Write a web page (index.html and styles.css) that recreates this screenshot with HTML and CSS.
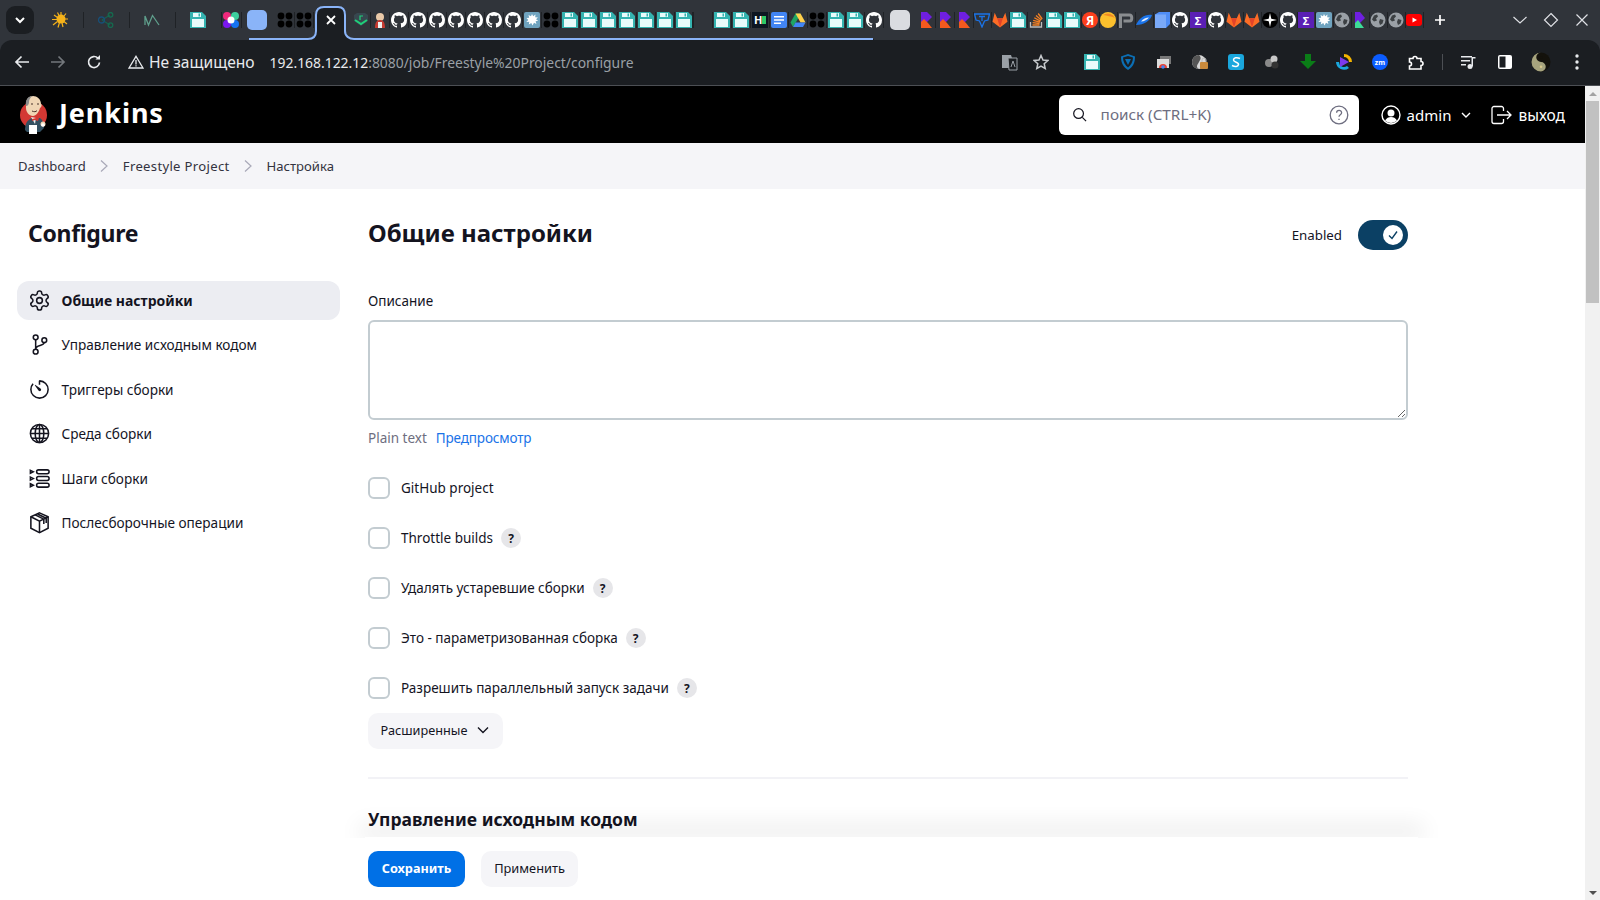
FILE: index.html
```html
<!DOCTYPE html>
<html lang="ru">
<head>
    <meta charset="UTF-8">
    <title>Freestyle Project Config [Jenkins]</title>
    <link rel="stylesheet" href="styles.css">
</head>
<body>

<!-- favicons used again and again in the tab strip -->
<svg class="defs" width="0" height="0">
    <symbol id="floppy" viewBox="0 0 16 16">
        <path d="M0 0h12l4 4v12H0z" fill="#35b3b0"/>
        <path d="M3 1h8v4H3zM2 7h12v8H2z" fill="#e9fbfb"/>
        <path d="M8.500 1.500h1.500v3H8.500z" fill="#35b3b0"/>
    </symbol>
    <symbol id="github" viewBox="0 0 16 16">
        <path fill="#fff" d="M8 0C3.58 0 0 3.58 0 8c0 3.54 2.29 6.53 5.47 7.59.4.07.55-.17.55-.38 0-.19-.01-.82-.01-1.49-2.01.37-2.53-.49-2.69-.94-.09-.23-.48-.94-.82-1.13-.28-.15-.68-.52-.01-.53.63-.01 1.08.58 1.23.82.72 1.21 1.87.87 2.33.66.07-.52.28-.87.51-1.07-1.78-.2-3.64-.89-3.64-3.95 0-.87.31-1.59.82-2.15-.08-.2-.36-1.02.08-2.12 0 0 .67-.21 2.2.82.64-.18 1.32-.27 2-.27.68 0 1.36.09 2 .27 1.53-1.04 2.2-.82 2.2-.82.44 1.1.16 1.92.08 2.12.51.56.82 1.27.82 2.15 0 3.07-1.87 3.75-3.65 3.95.29.25.54.73.54 1.48 0 1.07-.01 1.93-.01 2.2 0 .21.15.46.55.38A8.013 8.013 0 0016 8c0-4.42-3.58-8-8-8z"/>
    </symbol>
    <symbol id="dots" viewBox="0 0 16 16">
        <circle cx="4" cy="4" r="3.400"/><circle cx="12" cy="4" r="3.400"/>
        <circle cx="4" cy="12" r="3.400"/><circle cx="12" cy="12" r="3.400"/>
    </symbol>
    <symbol id="splash" viewBox="0 0 16 16">
        <rect width="16" height="16" rx="2" fill="#6fa3bf"/>
        <path d="M8 2l1.200 2.200L11.500 2.500l-.3 2.700 2.800.3-2 1.700 2.200 1.500-2.600.6.800 2.700-2.400-1.200L8.500 13.500 7.300 11l-2.500 1.500.5-2.700-3 .2 2-2L2.500 6l2.700-.3L4.500 3l2.500 1.200z" fill="#fff"/>
    </symbol>
    <symbol id="kotlin" viewBox="0 0 16 16">
        <path d="M3 0h6l5 5-5 5H3z" fill="#6f1fe0"/>
        <path d="M3 10l3-3 4 4 4 5H3z" fill="#f4591e"/>
    </symbol>
    <symbol id="gitlab" viewBox="0 0 16 16">
        <path d="M8 15.500L.500 9.800 2.700.8l2.500 5.400h5.600L13.300.8l2.200 9z" fill="#fc6d26"/>
        <path d="M8 15.500L5.200 6.200h5.600z" fill="#e24329"/>
    </symbol>
    <symbol id="globe" viewBox="0 0 16 16">
        <circle cx="8" cy="8" r="7.500" fill="#9aa0a6"/>
        <path d="M4 3.500l3-1 1 2-2 2 1 2-3 1-2-2zM10 7l3.500 1-1 3.500-2.500 1.500-1-3z" fill="#3c4043"/>
    </symbol>
</svg>

<div class="tabstrip">
    <!-- outline of the active tab and the tab group line -->
    <svg class="tab-outline" width="880" height="41" viewBox="0 0 880 41">
        <path d="M249 40v-1h59c5 0 8-3 8-8V15c0-5 3-8 8-8h14c5 0 8 3 8 8v16c0 5 3 8 8 8h520v1z" fill="#1b1e22"/>
        <path d="M249 39h59c5 0 8-3 8-8V15c0-5 3-8 8-8h14c5 0 7 3 7 8v16c0 5 4 8 9 8h519" fill="none" stroke="#8ab4f8" stroke-width="2"/>
    </svg>

    <button class="tab-search">
        <svg width="12" height="12" viewBox="0 0 12 12"><path d="M2 4l4 4 4-4" fill="none" stroke="#fff" stroke-width="2"/></svg>
    </button>

    <span class="tab wide"><svg class="fav" viewBox="0 0 16 16"><circle cx="9" cy="7" r="4.500" fill="#f5b21a"/><path d="M9 0v3M14 1.500l-2 2.500M16 7h-3M15 12l-3-2.500M11 15l-1-4M6 15.500l1.500-5M1 13l4.500-3.500M0 7.500h5M2 3l3.500 2.500M5.500 0.500l1.500 3" stroke="#f5b21a" stroke-width="1.200"/></svg></span>
    <span class="tab wide"><svg class="fav" viewBox="0 0 16 16" fill="none" stroke-width="1.300"><path d="M4 8l8-5M4 8l8 5" stroke="#15604f"/><circle cx="3.500" cy="8" r="3" stroke="#174f78"/><circle cx="12.500" cy="2.800" r="2.300" stroke="#156a4f"/><circle cx="12.500" cy="13.200" r="2.300" stroke="#156a4f"/></svg></span>
    <span class="tab wide"><svg class="fav" viewBox="0 0 16 16" fill="none" stroke="#5f9f8c" stroke-width="1.300"><path d="M1 13V4l3.500 9 4-9.500L15 13"/></svg></span>
    <span class="tab wide"><svg class="fav"><use href="#floppy"/></svg></span>
    <span class="tab w20"><svg class="fav" viewBox="0 0 16 16"><circle cx="4" cy="4" r="4" fill="#f0297c"/><circle cx="12" cy="4" r="4" fill="#3ecf9e"/><circle cx="4" cy="12" r="4" fill="#7a18f0"/><circle cx="12" cy="12" r="4" fill="#1573f0"/><circle cx="8" cy="8" r="3.500" fill="#fff"/></svg></span>
    <span class="tab w32"><span class="blank blue"></span></span>
    <span class="tab after-blank"><svg class="fav"><use href="#dots"/></svg></span>
    <span class="tab"><svg class="fav"><use href="#dots"/></svg></span>

    <span class="tab-active">
        <svg width="12" height="12" viewBox="0 0 12 12"><path d="M2 2l8 8M10 2l-8 8" stroke="#fff" stroke-width="1.800"/></svg>
    </span>

    <span class="tab"><svg class="fav" viewBox="0 0 16 16"><path d="M1 3l3-2h8l3 2v6l-7 5-7-5z" fill="#37474f"/><path d="M2 8l6 4 6-4" fill="none" stroke="#1fd07a" stroke-width="2"/><path d="M7 8V4h3" fill="none" stroke="#1fd07a" stroke-width="1.200"/></svg></span>
    <span class="tab"><svg class="fav" viewBox="0 0 16 16"><circle cx="8" cy="5" r="4" fill="#e9c9a8"/><path d="M3 16c0-6 2-8 5-8s5 2 5 8z" fill="#c43a32"/><path d="M6 10h4v6H6z" fill="#eee"/></svg></span>
    <span class="tab"><svg class="fav"><use href="#github"/></svg></span>
    <span class="tab"><svg class="fav"><use href="#github"/></svg></span>
    <span class="tab"><svg class="fav"><use href="#github"/></svg></span>
    <span class="tab"><svg class="fav"><use href="#github"/></svg></span>
    <span class="tab"><svg class="fav"><use href="#github"/></svg></span>
    <span class="tab"><svg class="fav"><use href="#github"/></svg></span>
    <span class="tab"><svg class="fav"><use href="#github"/></svg></span>
    <span class="tab"><svg class="fav"><use href="#splash"/></svg></span>
    <span class="tab"><svg class="fav"><use href="#dots"/></svg></span>
    <span class="tab"><svg class="fav"><use href="#floppy"/></svg></span>
    <span class="tab"><svg class="fav"><use href="#floppy"/></svg></span>
    <span class="tab"><svg class="fav"><use href="#floppy"/></svg></span>
    <span class="tab"><svg class="fav"><use href="#floppy"/></svg></span>
    <span class="tab"><svg class="fav"><use href="#floppy"/></svg></span>
    <span class="tab"><svg class="fav"><use href="#floppy"/></svg></span>
    <span class="tab"><svg class="fav"><use href="#floppy"/></svg></span>

    <span class="tab tab-gap"></span>

    <span class="tab"><svg class="fav"><use href="#floppy"/></svg></span>
    <span class="tab"><svg class="fav"><use href="#floppy"/></svg></span>
    <span class="tab"><svg class="fav" viewBox="0 0 16 16"><rect width="16" height="16" fill="#0d1621"/><text x="2" y="12" class="hn-glyph">H</text><rect x="10" y="4" width="4" height="8" fill="#2ec866"/></svg></span>
    <span class="tab"><svg class="fav" viewBox="0 0 16 16"><rect width="16" height="16" rx="2" fill="#4285f4"/><path d="M3 4h10v1.600H3zM3 7.200h10v1.600H3zM3 10.400h7V12H3z" fill="#fff"/></svg></span>
    <span class="tab"><svg class="fav" viewBox="0 0 16 16"><path d="M5.500 1.500h5L8 6.500 5.500 11 3 15 .5 10.500z" fill="#1fa463"/><path d="M5.500 1.500h5l5 9h-5z" fill="#ffd04b"/><path d="M3 15l2.500-4.500h10L13 15z" fill="#4285f4"/></svg></span>
    <span class="tab"><svg class="fav"><use href="#dots"/></svg></span>
    <span class="tab"><svg class="fav"><use href="#floppy"/></svg></span>
    <span class="tab"><svg class="fav"><use href="#floppy"/></svg></span>
    <span class="tab"><svg class="fav"><use href="#github"/></svg></span>

    <span class="tab w33"><span class="blank grey"></span></span>

    <span class="tab"><svg class="fav"><use href="#kotlin"/></svg></span>
    <span class="tab"><svg class="fav"><use href="#kotlin"/></svg></span>
    <span class="tab"><svg class="fav"><use href="#kotlin"/></svg></span>

    <span class="tab t18"><svg class="fav" viewBox="0 0 16 16" fill="none" stroke="#1a73e8" stroke-width="1.300"><path d="M.5 2h15L14 8l-3.500 1L8 15l-2.500-6L2 8zM5 4.500h6M8 4.500V9"/></svg></span>
    <span class="tab t18"><svg class="fav"><use href="#gitlab"/></svg></span>
    <span class="tab t18"><svg class="fav"><use href="#floppy"/></svg></span>
    <span class="tab t18"><svg class="fav" viewBox="0 0 16 16" fill="none" stroke-width="1.300"><path d="M2.500 10v5h11v-5" stroke="#bcbbbb"/><path d="M4.500 13h7M4.600 10.700l7 .8M5.200 8.300l6.800 1.800M6.300 5.800l6.200 3.300M8 3.500l5.300 4.500M10.200 1.500l4 5.500" stroke="#f48024"/></svg></span>
    <span class="tab t18"><svg class="fav"><use href="#floppy"/></svg></span>
    <span class="tab t18"><svg class="fav"><use href="#floppy"/></svg></span>
    <span class="tab t18"><svg class="fav" viewBox="0 0 16 16"><circle cx="8" cy="8" r="8" fill="#fc3f1d"/><text x="8" y="12.500" text-anchor="middle" class="ya-glyph">Я</text></svg></span>
    <span class="tab t18"><svg class="fav" viewBox="0 0 16 16"><circle cx="8" cy="8" r="8" fill="#fbc02d"/><path d="M3 3a8 8 0 0 1 12 3c-4-2-8-2-12-3z" fill="#f08a24"/></svg></span>
    <span class="tab t18"><svg class="fav" viewBox="0 0 16 16" fill="none" stroke="#8a8d90" stroke-width="3"><path d="M2.500 16V3h9c3 0 3 6 0 6h-6"/></svg></span>
    <span class="tab t18"><svg class="fav" viewBox="0 0 16 16"><path d="M0 13C3 6 9 2 16 3c-1 5-8 10-16 10z" fill="#1a73e8"/><path d="M5 9.500C7 7 10 5.500 13 5.500c-1.500 2-5 4-8 4z" fill="#e8f0fe"/></svg></span>
    <span class="tab t18"><svg class="fav" viewBox="0 0 16 16"><path d="M1 2.500L5 0h11v12l-4 4H1z" fill="#4f8df5"/><path d="M1 2.500h11V16H1z" fill="#7aa9f7"/></svg></span>
    <span class="tab t18"><svg class="fav"><use href="#github"/></svg></span>
    <span class="tab t18"><svg class="fav" viewBox="0 0 16 16"><rect width="16" height="16" fill="#5a1fb4"/><text x="8" y="12.500" text-anchor="middle" class="sigma-glyph">Σ</text></svg></span>
    <span class="tab t18"><svg class="fav"><use href="#github"/></svg></span>
    <span class="tab t18"><svg class="fav"><use href="#gitlab"/></svg></span>
    <span class="tab t18"><svg class="fav"><use href="#gitlab"/></svg></span>
    <span class="tab t18"><svg class="fav" viewBox="0 0 16 16"><rect width="16" height="16" rx="8" fill="#000"/><path d="M8 1l1.300 5.700L15 8l-5.700 1.300L8 15 6.700 9.300 1 8l5.700-1.300z" fill="#fff"/></svg></span>
    <span class="tab t18"><svg class="fav"><use href="#github"/></svg></span>
    <span class="tab t18"><svg class="fav" viewBox="0 0 16 16"><rect width="16" height="16" fill="#5a1fb4"/><text x="8" y="12.500" text-anchor="middle" class="sigma-glyph">Σ</text></svg></span>
    <span class="tab t18"><svg class="fav"><use href="#splash"/></svg></span>
    <span class="tab t18"><svg class="fav"><use href="#globe"/></svg></span>
    <span class="tab t18"><svg class="fav" viewBox="0 0 16 16"><path d="M3 0h5l5 6-5 5H3z" fill="#6f1fe0"/><path d="M3 11l3-3 6 8H3z" fill="#3ddc97"/></svg></span>
    <span class="tab t18"><svg class="fav"><use href="#globe"/></svg></span>
    <span class="tab t18"><svg class="fav"><use href="#globe"/></svg></span>
    <span class="tab t18"><svg class="fav" viewBox="0 0 16 16"><rect y="2" width="16" height="12" rx="3" fill="#f00"/><path d="M6.500 5.500v5L11 8z" fill="#fff"/></svg></span>

    <span class="tab-new">
        <svg width="12" height="12" viewBox="0 0 12 12"><path d="M6 1v10M1 6h10" stroke="#fff" stroke-width="1.700"/></svg>
    </span>

    <div class="win-controls">
        <span class="win-btn"><svg width="16" height="16" viewBox="0 0 16 16"><path d="M1.500 5L8 11l6.500-6" fill="none" stroke="#dfe1e5" stroke-width="1.200"/></svg></span>
        <span class="win-btn"><svg width="16" height="16" viewBox="0 0 16 16"><path d="M8 1.500L14.500 8 8 14.500 1.500 8z" fill="none" stroke="#dfe1e5" stroke-width="1.200"/></svg></span>
        <span class="win-btn"><svg width="16" height="16" viewBox="0 0 16 16"><path d="M2.500 2.500l11 11M13.500 2.500l-11 11" stroke="#dfe1e5" stroke-width="1.200"/></svg></span>
    </div>
</div>

<div class="toolbar">
    <span class="tb-btn"><svg width="16" height="16" viewBox="0 0 16 16" fill="none" stroke="#e8eaed" stroke-width="1.700"><path d="M15 8H2M7.500 2.500L2 8l5.500 5.500"/></svg></span>
    <span class="tb-btn"><svg width="16" height="16" viewBox="0 0 16 16" fill="none" stroke="#73777c" stroke-width="1.700"><path d="M1 8h13M8.500 2.500L14 8l-5.500 5.500"/></svg></span>
    <span class="tb-btn"><svg width="16" height="16" viewBox="0 0 16 16" fill="none" stroke="#e8eaed" stroke-width="1.700"><path d="M13.500 8.500a5.500 5.500 0 1 1-1.600-4.400"/><path d="M14 1v4.500H9.500" fill="#e8eaed" stroke="none"/></svg></span>
    <svg class="warn-icon" width="16" height="14" viewBox="0 0 16 14" fill="none" stroke="#e8eaed" stroke-width="1.300"><path d="M8 1.300L15 13H1z"/><path d="M8 5v4.500M8 10.300v1.200"/></svg>
    <span class="not-secure">Не защищено</span>
    <span class="url"><span class="url-host">192.168.122.12</span>:8080/job/Freestyle%20Project/configure</span>

    <div class="tb-right">
        <span class="tb-btn small"><svg width="17" height="17" viewBox="0 0 17 17"><path d="M1 1h9l1 3h-1v10H1z" fill="#9aa0a6"/><path d="M7 4h9v12H8z" fill="#1b1e22" stroke="#9aa0a6"/><path d="M10 13l2-6 2 6" fill="none" stroke="#9aa0a6"/></svg></span>
        <span class="tb-btn small"><svg width="16" height="16" viewBox="0 0 16 16"><path d="M8 1.500l2 4.500 4.800.5-3.600 3.200 1 4.800L8 12l-4.200 2.500 1-4.800L1.200 6.500 6 6z" fill="none" stroke="#c7cacd" stroke-width="1.500"/></svg></span>
        <span class="tb-btn first-ext"><svg class="fav"><use href="#floppy"/></svg></span>
        <span class="tb-btn"><svg class="fav" viewBox="0 0 16 16"><path d="M8 0l7 2.500C15 9 13 13 8 16 3 13 1 9 1 2.500z" fill="#0b6fb5"/><path d="M3 3.500L8 2l5 1.500C13 8 11 11 8 13.500 5 11 3 8 3 3.500z" fill="#1b1e22"/><path d="M5 5h6L8 11z" fill="#0b6fb5"/></svg></span>
        <span class="tb-btn"><svg class="fav" viewBox="0 0 16 16"><path d="M4 2h11v8H4z" fill="#777"/><path d="M1 5h12v9H1z" fill="#ddd"/><path d="M3 14a4 4 0 0 1 8 0z" fill="#ea4335"/><circle cx="7" cy="13" r="1.800" fill="#4285f4"/></svg></span>
        <span class="tb-btn"><svg class="fav" viewBox="0 0 16 16"><circle cx="7" cy="8" r="7" fill="#d8d8d8"/><path d="M7 1a7 7 0 0 0 0 14c-4-2-1-5 0-7s3-4 0-7z" fill="#555"/><rect x="8" y="8" width="8" height="7" rx="1" fill="#c98a3c"/><path d="M10 8V6a2 2 0 0 1 4 0v2" fill="none" stroke="#bbb"/></svg></span>
        <span class="tb-btn"><svg class="fav" viewBox="0 0 16 16"><rect width="16" height="16" rx="3" fill="#1aa7dd"/><path d="M12 4.500C9 3 5.500 3.500 5.500 6S11 8 10.500 10.500 7 13 4 11.500" fill="none" stroke="#fff" stroke-width="1.500"/></svg></span>
        <span class="tb-btn"><svg class="fav" viewBox="0 0 16 16"><circle cx="5" cy="9" r="4" fill="#8a8a8a"/><circle cx="10" cy="5" r="3.500" fill="#c9c9c9"/><circle cx="11" cy="11" r="3.500" fill="#333"/></svg></span>
        <span class="tb-btn"><svg class="fav" viewBox="0 0 16 16"><path d="M5 0h6v7h5l-8 8-8-8h5z" fill="#0a7d17"/></svg></span>
        <span class="tb-btn"><svg class="fav" viewBox="0 0 16 16"><path d="M8 0a8 8 0 0 1 8 8h-3a5 5 0 0 0-5-5z" fill="#f4b400"/><path d="M0 8a8 8 0 0 0 13 6l-2-2A5 5 0 0 1 3 8z" fill="#1aa7dd"/><path d="M4 3l9 5-9 5z" fill="#7c3aed"/></svg></span>
        <span class="tb-btn"><svg class="fav" viewBox="0 0 16 16"><circle cx="8" cy="8" r="8" fill="#0b5cff"/><text x="8" y="10.500" text-anchor="middle" class="zm-glyph">zm</text></svg></span>
        <span class="tb-btn"><svg class="fav" viewBox="0 0 16 16" fill="none" stroke="#fff" stroke-width="1.600"><path d="M1.500 4.500h3.500a2 2 0 0 1 4 0H13v3a2 2 0 0 1 0 4v3.500H1.500v-3a2 2 0 0 0 0-4z"/></svg></span>
        <span class="tb-sep"></span>
        <span class="tb-btn"><svg class="fav" viewBox="0 0 16 16" fill="#e8eaed"><path d="M0 2h11v1.500H0zM0 6h9v1.500H0zM0 10h5v1.500H0z"/><circle cx="9" cy="12.500" r="2.500"/><path d="M10.500 3h4v1.500H12v8h-1.500z"/></svg></span>
        <span class="tb-btn"><svg class="fav" viewBox="0 0 16 16"><rect x="1" y="1" width="14" height="14" rx="2" fill="#fff"/><rect x="2.500" y="2.500" width="6" height="11" fill="#1b1e22"/></svg></span>
        <span class="tb-btn"><svg width="20" height="20" viewBox="0 0 20 20"><circle cx="10" cy="10" r="9.500" fill="#14120c"/><path d="M10 .5a9.500 9.500 0 0 0 0 19 4.750 4.750 0 0 0 0-9.500 4.750 4.750 0 0 1 0-9.500z" fill="#a7a47e"/><circle cx="10" cy="5.300" r="1.300" fill="#14120c"/><circle cx="10" cy="14.800" r="1.300" fill="#d8c98a"/></svg></span>
        <span class="tb-btn"><svg width="4" height="16" viewBox="0 0 4 16" fill="#e8eaed"><circle cx="2" cy="2" r="1.700"/><circle cx="2" cy="8" r="1.700"/><circle cx="2" cy="14" r="1.700"/></svg></span>
    </div>
</div>

<div class="viewport">
    <div class="page">
        <header class="jk-header">
            <svg class="jk-logo" width="30" height="40" viewBox="0 0 30 40">
                <circle cx="15.500" cy="20" r="13.500" fill="#d33833"/>
                <path d="M7 35c0-6 2-10 7-12l8 0c3 2 4 6 4 10l-4 4H9z" fill="#335061"/>
                <path d="M13 22l5 1-1 6z" fill="#f0f0f0"/>
                <path d="M14 24l4-1 3 0-1 3-3-1-3 1z" fill="#d33833"/>
                <path d="M8 9C8 4 11 1 15 1s8 3 8 8c1 0 1 3-1 4-1 4-4 8-7 8-4 0-7-4-7-8z" fill="#f0d6b5"/>
                <path d="M8 11C7 5 10 1 15 1c-3 1-4 4-4 6 0 2-1 4-3 4z" fill="#8c8c8c"/>
                <path d="M13 9l2 0M19 9l2 0M14 16c2 1 4 1 5-.5" stroke="#49322a" stroke-width="1" fill="none"/>
                <path d="M11 30h8v9h-8z" fill="#fff"/>
                <circle cx="25" cy="29" r="2.500" fill="#f0d6b5"/>
                <circle cx="25" cy="30" r="1.800" fill="#fff"/>
            </svg>
            <span class="jk-name">Jenkins</span>

            <div class="jk-search">
                <svg class="search-icon" width="15" height="15" viewBox="0 0 16 16" fill="none" stroke="#14141f" stroke-width="1.300"><circle cx="7" cy="7" r="5.200"/><path d="M11 11l4 4"/></svg>
                <span class="search-text">поиск (CTRL+K)</span>
                <svg class="search-help" width="20" height="20" viewBox="0 0 20 20" fill="none" stroke="#6e6e80" stroke-width="1.300"><circle cx="10" cy="10" r="8.800"/><path d="M7.600 7.800c0-3.200 5-3.200 5 0 0 2-2.600 2-2.600 4"/><path d="M10 13.800v1.200"/></svg>
            </div>

            <span class="jk-user">
                <svg width="20" height="20" viewBox="0 0 20 20"><circle cx="10" cy="10" r="9" fill="none" stroke="#fff" stroke-width="1.400"/><circle cx="10" cy="8" r="3.500" fill="#fff"/><path d="M4 15.500c1.500-2.500 3.500-3.500 6-3.500s4.500 1 6 3.500a8.500 8.500 0 0 1-12 0z" fill="#fff"/></svg>
                <span class="user-name">admin</span>
                <svg class="user-caret" width="12" height="12" viewBox="0 0 12 12"><path d="M2 4l4 4 4-4" fill="none" stroke="#fff" stroke-width="1.400"/></svg>
            </span>
            <span class="jk-logout">
                <svg width="21" height="20" viewBox="0 0 21 20" fill="none" stroke="#fff" stroke-width="1.300"><path d="M12.500 6V3.500a2 2 0 0 0-2-2H3a2 2 0 0 0-2 2v13a2 2 0 0 0 2 2h7.500a2 2 0 0 0 2-2V14"/><path d="M6 10h14M16 6l4 4-4 4"/></svg>
                <span>выход</span>
            </span>
        </header>

        <nav class="breadcrumbs">
            <a href="#">Dashboard</a>
            <svg class="crumb-sep" width="10" height="14" viewBox="0 0 10 14"><path d="M2 1.500L8 7l-6 5.500" fill="none" stroke="#a9a9b8" stroke-width="1.200"/></svg>
            <a class="crumb-project" href="#">Freestyle Project</a>
            <svg class="crumb-sep" width="10" height="14" viewBox="0 0 10 14"><path d="M2 1.500L8 7l-6 5.500" fill="none" stroke="#a9a9b8" stroke-width="1.200"/></svg>
            <a href="#">Настройка</a>
        </nav>

        <div class="layout">
            <aside class="sidebar">
                <h1 class="side-title">Configure</h1>
                <ul class="side-list">
                    <li class="side-item selected">
                        <svg class="side-icon" viewBox="0 0 24 24"><path d="M12.220 2h-.44a2 2 0 0 0-2 2v.18a2 2 0 0 1-1 1.730l-.43.25a2 2 0 0 1-2 0l-.15-.08a2 2 0 0 0-2.730.73l-.22.38a2 2 0 0 0 .73 2.730l.15.1a2 2 0 0 1 1 1.720v.51a2 2 0 0 1-1 1.740l-.15.09a2 2 0 0 0-.73 2.730l.22.38a2 2 0 0 0 2.730.73l.15-.08a2 2 0 0 1 2 0l.43.25a2 2 0 0 1 1 1.730V20a2 2 0 0 0 2 2h.44a2 2 0 0 0 2-2v-.18a2 2 0 0 1 1-1.730l.43-.25a2 2 0 0 1 2 0l.15.08a2 2 0 0 0 2.730-.73l.22-.39a2 2 0 0 0-.73-2.730l-.15-.08a2 2 0 0 1-1-1.740v-.5a2 2 0 0 1 1-1.740l.15-.09a2 2 0 0 0 .73-2.730l-.22-.38a2 2 0 0 0-2.730-.73l-.15.08a2 2 0 0 1-2 0l-.43-.25a2 2 0 0 1-1-1.730V4a2 2 0 0 0-2-2z"/><circle cx="12" cy="12" r="3"/></svg>
                        Общие настройки
                    </li>
                    <li class="side-item">
                        <svg class="side-icon" viewBox="0 0 24 24"><circle cx="8" cy="4.500" r="2.500"/><circle cx="8" cy="19.500" r="2.500"/><circle cx="17" cy="7.500" r="2.500"/><path d="M8 7v10M8 17c0-5 8-3 9-7"/></svg>
                        Управление исходным кодом
                    </li>
                    <li class="side-item">
                        <svg class="side-icon" viewBox="0 0 512 512"><path class="thick" d="M112.910 128A191.850 191.850 0 0064 254c-1.180 106.350 85.650 193.800 192 194 106.200.2 192-85.830 192-192 0-104.540-83.550-189.610-187.500-192a4.360 4.360 0 00-4.500 4.370V152"/><path class="solid" d="M233.380 278.630l-79-113a8.130 8.130 0 0111.320-11.320l113 79a32.500 32.500 0 01-37.250 53.260 33.210 33.210 0 01-8.070-8.940z"/></svg>
                        Триггеры сборки
                    </li>
                    <li class="side-item">
                        <svg class="side-icon" viewBox="0 0 24 24"><circle cx="12" cy="12" r="9.500"/><ellipse cx="12" cy="12" rx="4.500" ry="9.500"/><path d="M12 2.500v19M2.500 12h19M4 7h16M4 17h16"/></svg>
                        Среда сборки
                    </li>
                    <li class="side-item">
                        <svg class="side-icon" viewBox="0 0 24 24"><rect x="9" y="3" width="13" height="4" rx="2"/><rect x="9" y="10" width="13" height="4" rx="2"/><rect x="9" y="17" width="13" height="4" rx="2"/><path d="M2.500 3.500L5.500 5l-3 1.500zM2.500 10.500l3 1.500-3 1.500zM2.500 17.500l3 1.500-3 1.500z"/></svg>
                        Шаги сборки
                    </li>
                    <li class="side-item">
                        <svg class="side-icon" viewBox="0 0 24 24"><path d="M12 2l9 4v12l-9 4.500L3 18V6z"/><path d="M3 6l9 4.500L21 6M12 10.500v12M7.500 4L16.500 8.500v5M10 3.200l9 4.300v5"/></svg>
                        Послесборочные операции
                    </li>
                </ul>
            </aside>

            <main class="form">
                <div class="form-head">
                    <h2 class="form-title">Общие настройки</h2>
                    <span class="enabled-label">Enabled</span>
                    <span class="toggle">
                        <span class="toggle-knob">
                            <svg width="12" height="12" viewBox="0 0 12 12"><path d="M2 6.500L5 9.500 10 2.500" fill="none" stroke="#0b4064" stroke-width="1.400"/></svg>
                        </span>
                    </span>
                </div>

                <label class="field-label">Описание</label>
                <textarea class="field-text"></textarea>
                <div class="preview-row">
                    <span class="plain">Plain text</span>
                    <a class="preview-link" href="#">Предпросмотр</a>
                </div>

                <div class="checks">
                    <label class="check"><input type="checkbox"><span>GitHub project</span></label>
                    <label class="check"><input type="checkbox"><span>Throttle builds</span><i class="help">?</i></label>
                    <label class="check"><input type="checkbox"><span>Удалять устаревшие сборки</span><i class="help">?</i></label>
                    <label class="check"><input type="checkbox"><span>Это - параметризованная сборка</span><i class="help">?</i></label>
                    <label class="check"><input type="checkbox"><span>Разрешить параллельный запуск задачи</span><i class="help">?</i></label>
                </div>

                <button class="btn advanced">
                    Расширенные
                    <svg width="14" height="14" viewBox="0 0 14 14"><path d="M2 4.500l5 5 5-5" fill="none" stroke="#14141f" stroke-width="1.400"/></svg>
                </button>

                <hr class="divider">
                <h3 class="section-title">Управление исходным кодом</h3>
            </main>

            <div class="bottom-bar">
                <button class="btn primary">Сохранить</button>
                <button class="btn">Применить</button>
            </div>
        </div>
    </div>

    <div class="scrollbar">
        <span class="scroll-arrow up"></span>
        <span class="scroll-thumb"></span>
        <span class="scroll-arrow down"></span>
    </div>
</div>

</body>
</html>
```

FILE: styles.css
```css
*{
    margin: 0;
    padding: 0;
    box-sizing: border-box;
}
html,body{
    height: 900px;
    overflow: hidden;
}
body{
    font-family: "Noto Sans", "Liberation Sans", sans-serif;
    font-size: 13.5px;
    color: #14141f;
    background-color: #30343a;
    display: flex;
    flex-direction: column;
}
ul{
    list-style: none;
}
a{
    text-decoration: none;
    color: inherit;
}
.defs{
    display: block;
    height: 0;
}
.sigma-glyph{
    font: bold 11px "Noto Sans", sans-serif;
    fill: #fff;
}
.hn-glyph{
    font: bold 11px "Noto Sans", sans-serif;
    fill: #fff;
}
.ya-glyph{
    font: bold 12px "Noto Sans", sans-serif;
    fill: #fff;
}
.zm-glyph{
    font: bold 7px "Noto Sans", sans-serif;
    fill: #fff;
}

/* tab strip */
.tabstrip{
    height: 40px;
    flex: none;
    display: flex;
    align-items: center;
    padding-left: 6px;
    position: relative;
}
.tab-outline{
    position: absolute;
    left: 0;
    top: 0;
}
.tab-search{
    width: 28px;
    height: 28px;
    margin-right: 3px;
    border: none;
    border-radius: 9px;
    background-color: #1b1e22;
    display: flex;
    align-items: center;
    justify-content: center;
}
.fav{
    width: 16px;
    height: 16px;
    display: block;
}
.tab{
    width: 19px;
    height: 16px;
    flex: none;
    display: flex;
    justify-content: center;
    position: relative;
    box-shadow: 1px 0 0 #1f2226;
}
.tab.wide{
    width: 46px;
}
.tab.w20{
    width: 20px;
}
.tab.w32{
    width: 32px;
    box-shadow: none;
    align-items: center;
}
.tab.w33{
    width: 33px;
    box-shadow: none;
    align-items: center;
}
.tab.t18{
    width: 18px;
}
.tab.after-blank{
    margin-left: 2px;
}
.tab.tab-gap{
    box-shadow: 1px 0 0 #1f2226, -1px 0 0 #1f2226;
}
.blank{
    width: 20px;
    height: 20px;
    border-radius: 5px;
    flex: none;
}
.blank.blue{
    background-color: #8ab4f8;
}
.blank.grey{
    background-color: #dadce0;
}
.tab-active{
    width: 30px;
    margin: 0 5px 0 3px;
    display: flex;
    justify-content: center;
    position: relative;
}
.tab-new{
    width: 34px;
    display: flex;
    justify-content: center;
}
.win-controls{
    margin-left: auto;
    display: flex;
    padding-right: 3px;
}
.win-btn{
    width: 31px;
    display: flex;
    justify-content: center;
}

/* address bar */
.toolbar{
    height: 46px;
    flex: none;
    display: flex;
    align-items: center;
    padding: 0 5px 1px 4px;
    background-color: #1b1e22;
    border-bottom: 1px solid #4c4f54;
    border-radius: 12px 12px 0 0;
    position: relative;
}
.tb-btn{
    width: 36px;
    display: flex;
    justify-content: center;
    flex: none;
}
.tb-btn.small{
    width: 32px;
}
.tb-btn.first-ext{
    margin-left: 17px;
}
.warn-icon{
    margin-left: 16px;
}
.not-secure{
    margin-left: 5px;
    font-size: 15.6px;
    color: #e8eaed;
}
.url{
    margin-left: 15px;
    font-size: 13.9px;
    color: #9aa0a6;
}
.url-host{
    color: #e8eaed;
}
.tb-right{
    margin-left: auto;
    display: flex;
    align-items: center;
}
.tb-sep{
    width: 1px;
    height: 16px;
    margin: 0 8px;
    background-color: #4c4f54;
}

/* page area */
.viewport{
    flex: 1;
    display: flex;
    min-height: 0;
    background-color: #fff;
}
.page{
    flex: 1;
    min-width: 0;
    display: flex;
    flex-direction: column;
}
.scrollbar{
    width: 15px;
    flex: none;
    display: flex;
    flex-direction: column;
    align-items: center;
    background-color: #f1f1f1;
    position: relative;
}
.scroll-arrow{
    width: 0;
    height: 0;
    flex: none;
    border-left: 4px solid transparent;
    border-right: 4px solid transparent;
}
.scroll-arrow.up{
    margin: 6px 0 5px;
    border-bottom: 4px solid #a3a3a3;
}
.scroll-thumb{
    width: 13px;
    height: 202px;
    background-color: #c1c1c1;
}
.scroll-arrow.down{
    margin-top: auto;
    margin-bottom: 5px;
    border-top: 4px solid #505050;
}

/* jenkins header */
.jk-header{
    height: 57px;
    flex: none;
    display: flex;
    align-items: center;
    padding: 0 20px 0 18px;
    background-color: #000;
    color: #fff;
}
.jk-logo{
    flex: none;
}
.jk-name{
    margin-left: 11px;
    padding-bottom: 4px;
    font-size: 27px;
    font-weight: 700;
    letter-spacing: .9px;
}
.jk-search{
    width: 300px;
    height: 40px;
    margin-left: auto;
    padding: 0 10px 0 13px;
    display: flex;
    align-items: center;
    background-color: #fff;
    border-radius: 6px;
}
.search-text{
    margin-left: 14px;
    padding-bottom: 2px;
    font-size: 15.3px;
    color: #6e6e80;
}
.search-help{
    margin-left: auto;
}
.jk-user{
    margin-left: 22px;
    display: flex;
    align-items: center;
    font-size: 15px;
}
.user-name{
    margin-left: 6px;
}
.user-caret{
    margin-left: 9px;
}
.jk-logout{
    margin-left: 19px;
    display: flex;
    align-items: center;
    gap: 6px;
    font-size: 15.5px;
}

.breadcrumbs{
    height: 46px;
    flex: none;
    display: flex;
    align-items: center;
    padding: 0 0 1px 18px;
    font-size: 13.1px;
    background-color: #f5f5f8;
    color: #333340;
}
.crumb-project{
    letter-spacing: .32px;
}
.crumb-sep{
    margin: 0 13.5px;
}

/* sidebar and form */
.layout{
    flex: 1;
    min-height: 0;
    display: flex;
    position: relative;
    overflow: hidden;
}
.sidebar{
    width: 340px;
    padding-left: 17px;
    flex: none;
}
.side-title{
    height: 32px;
    margin: 28px 0 32px 11px;
    font-size: 23px;
    line-height: 32px;
    font-weight: 700;
    letter-spacing: -.3px;
}
.side-item{
    height: 39px;
    margin-bottom: 5.6px;
    display: flex;
    align-items: center;
    padding: 0 0 1px 10.5px;
    font-size: 13.6px;
    border-radius: 12px;
}
.side-item.selected{
    background-color: #ecedf2;
    font-size: 14px;
    font-weight: 700;
}
.side-icon{
    width: 23px;
    height: 23px;
    margin-right: 11px;
    flex: none;
    fill: none;
    stroke: #14141f;
    stroke-width: 1.600;
}
.side-icon .thick{
    stroke-width: 34;
}
.side-icon .solid{
    fill: #14141f;
    stroke: none;
}
.form{
    width: 1040px;
    margin-left: 28px;
    flex: none;
}
.form-head{
    height: 30px;
    margin-top: 31px;
    display: flex;
    align-items: center;
}
.form-title{
    padding-bottom: 5px;
    font-size: 24px;
    font-weight: 700;
    margin-right: auto;
}
.enabled-label{
    margin-right: 16px;
    padding-bottom: 1px;
    font-size: 13.3px;
}
.toggle{
    width: 50px;
    height: 30px;
    padding-right: 5px;
    display: flex;
    align-items: center;
    justify-content: flex-end;
    border-radius: 15px;
    background-color: #0b4064;
}
.toggle-knob{
    width: 20px;
    height: 20px;
    display: flex;
    align-items: center;
    justify-content: center;
    border-radius: 50%;
    background-color: #fff;
}
.field-label{
    display: block;
    margin-top: 41px;
    line-height: 20px;
}
.field-text{
    display: block;
    width: 100%;
    height: 100px;
    margin-top: 9px;
    border: 2px solid #c3ccd1;
    border-radius: 6px;
    background-color: #fff;
}
.preview-row{
    margin-top: 8px;
    line-height: 20px;
    display: flex;
    gap: 9px;
}
.plain{
    color: #6e6e80;
}
.preview-link{
    color: #1a73e8;
    letter-spacing: -.15px;
}
.checks{
    margin-top: 29px;
    display: flex;
    flex-direction: column;
    gap: 28px;
}
.check{
    height: 22px;
    display: flex;
    align-items: center;
}
.check span{
    padding-bottom: 1px;
}
.check input{
    appearance: none;
    width: 22px;
    height: 22px;
    margin-right: 11px;
    flex: none;
    border: 2px solid #c3ccd1;
    border-radius: 6px;
    background-color: #fff;
}
.help{
    width: 20px;
    height: 20px;
    margin-left: 8px;
    display: flex;
    align-items: center;
    justify-content: center;
    border-radius: 50%;
    background-color: #e6e6e9;
    font-size: 12px;
    font-style: normal;
    font-weight: 700;
}
.btn{
    height: 36px;
    border: none;
    border-radius: 10px;
    background-color: #f5f5f8;
    font-family: inherit;
    font-size: 12.8px;
    color: #14141f;
    display: inline-flex;
    align-items: center;
    justify-content: center;
    padding-bottom: 2px;
}
.btn.advanced{
    display: flex;
    width: 135px;
    margin-top: 14px;
    gap: 9px;
    font-size: 12.7px;
}
.btn.primary{
    background-color: #0070e6;
    color: #fff;
    font-size: 12.7px;
    font-weight: 700;
}
.divider{
    height: 2px;
    margin-top: 28px;
    border: none;
    background-color: #f2f2f6;
}
.section-title{
    margin-top: 27px;
    font-size: 17.5px;
    line-height: 26px;
    font-weight: 700;
}

/* sticky save bar over the form */
.bottom-bar{
    position: absolute;
    left: 343px;
    bottom: 0;
    width: 1075px;
    height: 63px;
    padding: 14px 0 0 25px;
    display: flex;
    align-items: flex-start;
    gap: 16px;
    background-color: #fff;
}
.bottom-bar::before{
    content: "";
    position: absolute;
    left: 22px;
    right: 0;
    top: 0;
    height: 1px;
    box-shadow: 0 -6px 22px 6px rgba(0,0,0,.09);
    clip-path: inset(-60px -60px 0 -60px);
}
.bottom-bar .btn{
    width: 97px;
}
```
